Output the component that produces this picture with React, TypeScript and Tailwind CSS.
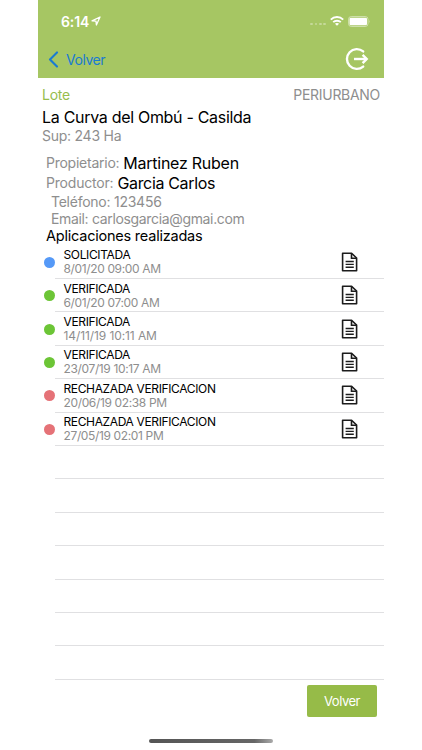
type Status = "requested" | "verified" | "rejected";

const dot: Record<Status, string> = {
  requested: "bg-[#5599f7]",
  verified: "bg-[#6cc536]",
  rejected: "bg-[#e57277]",
};

const applications: { status: Status; label: string; date: string }[] = [
  { status: "requested", label: "SOLICITADA", date: "8/01/20 09:00 AM" },
  { status: "verified", label: "VERIFICADA", date: "6/01/20 07:00 AM" },
  { status: "verified", label: "VERIFICADA", date: "14/11/19 10:11 AM" },
  { status: "verified", label: "VERIFICADA", date: "23/07/19 10:17 AM" },
  { status: "rejected", label: "RECHAZADA VERIFICACION", date: "20/06/19 02:38 PM" },
  { status: "rejected", label: "RECHAZADA VERIFICACION", date: "27/05/19 02:01 PM" },
];

function DocumentIcon() {
  return (
    <svg className="mr-[26px] h-[20px] w-[17px]" viewBox="0 0 17 20" fill="none" stroke="#1c1c1c" strokeWidth="1.6">
      <path d="M1.6 1.3H10.6L15.6 6V18.8H1.6Z" strokeLinejoin="round" />
      <path d="M10.5 1.4V6.3H15.4" />
      <path d="M4.6 9.5H12.8M4.6 12.4H12.8M4.6 15.3H12.8" strokeWidth="1.4" />
    </svg>
  );
}

function StatusBar() {
  return (
    <div className="flex h-[42px] items-center pr-[13px] pl-[23px] text-white">
      <span className="text-[14px] font-semibold tracking-[-0.1px]">6:14</span>
      <svg className="ml-[2px] h-[10px] w-[10px]" viewBox="0 0 10 10" fill="none" stroke="white" strokeWidth="1.3" strokeLinejoin="round">
        <path d="M1 4.9L9 1L5.4 9L5 5.1Z" />
      </svg>
      <div className="mt-[6px] ml-auto flex gap-[1.5px]">
        {[0, 1, 2, 3].map((i) => (
          <span key={i} className="size-[2.8px] rounded-full bg-white/35" />
        ))}
      </div>
      <svg className="ml-[4px] h-[10px] w-[14px]" viewBox="0 0 14 10" fill="none" stroke="white" strokeWidth="1.9">
        <path d="M0.8 3.6C4.2 0.2 9.8 0.2 13.2 3.6" />
        <path d="M3.2 6.2C5.2 4.2 8.8 4.2 10.8 6.2" />
        <path d="M4.9 7.7Q7 6.2 9.1 7.7L7 9.8Z" fill="white" stroke="none" />
      </svg>
      <svg className="ml-[4px] h-[11px] w-[23px]" viewBox="0 0 23 11">
        <rect x="0.5" y="0.5" width="19.5" height="10" rx="2.8" fill="none" stroke="white" strokeOpacity="0.45" />
        <rect x="1.5" y="1.7" width="17.5" height="7.6" rx="1.4" fill="white" />
        <path d="M21.3 3.8Q22.5 5.5 21.3 7.2Z" fill="white" fillOpacity="0.5" />
      </svg>
    </div>
  );
}

export default function App() {
  return (
    <div className="flex h-[750px] w-[422px] justify-center overflow-hidden bg-white font-['Inter',sans-serif] whitespace-nowrap text-[#8e8e8e]">
      <main className="flex h-full w-[346px] flex-col">
        <header className="h-[77.5px] shrink-0 bg-[#a6c663]">
          <StatusBar />
          <nav className="flex h-[34px] items-center pl-[10px]">
            <svg className="h-[17px] w-[11px]" viewBox="0 0 11 17" fill="none" stroke="#197bd2" strokeWidth="2.1" strokeLinecap="round" strokeLinejoin="round">
              <path d="M9 1.4L2 8.5L9 15.6" />
            </svg>
            <span className="ml-[7px] text-[14px] tracking-[-0.45px] text-[#197bd2]">Volver</span>
            <svg className="mr-[15px] ml-auto h-[24px] w-[24px]" viewBox="0 0 24 24" fill="none" stroke="white" strokeWidth="2.4">
              <path d="M18.2 4.4A9.9 9.9 0 1 0 18.2 19.6" strokeLinecap="round" />
              <path d="M9 12H21.5" />
              <path d="M17.6 7.9L21.7 12L17.6 16.1" />
            </svg>
          </nav>
        </header>

        <section className="pt-[7px] pr-[4px] pl-[4px]">
          <div className="flex h-[20px] items-center justify-between">
            <span className="text-[14px] tracking-[-0.25px] text-[#97bd4c]">Lote</span>
            <span className="text-[14px] tracking-[-0.3px]">PERIURBANO</span>
          </div>
          <h1 className="flex h-[25px] items-center text-[16px] tracking-[-0.3px] text-black">La Curva del Ombú - Casilda</h1>
          <p className="flex h-[12px] items-center text-[14px] tracking-[-0.25px]">Sup: 243 Ha</p>
        </section>

        <section className="pt-[11px] pl-[8px]">
          <p className="flex h-[20px] items-center gap-[4px] text-[14px] tracking-[-0.25px]">
            Propietario: <span className="text-[16px] tracking-[-0.25px] text-black">Martinez Ruben</span>
          </p>
          <p className="flex h-[20px] items-center gap-[4px] text-[14px] tracking-[-0.2px]">
            Productor: <span className="text-[16px] tracking-[-0.33px] text-black">Garcia Carlos</span>
          </p>
          <p className="flex h-[17px] items-center pl-[5px] text-[14px] tracking-[-0.25px]">Teléfono: 123456</p>
          <p className="flex h-[17px] items-center pl-[5px] text-[14px] tracking-[-0.34px]">Email: carlosgarcia@gmai.com</p>
          <h2 className="flex h-[19px] items-center text-[14.5px] tracking-[-0.22px] text-black">Aplicaciones realizadas</h2>
        </section>

        <ul className="flex flex-col">
          {applications.map((a) => (
            <li key={a.date} className="flex h-[33.42px] items-center pl-[6px]">
              <span className={`size-[11px] shrink-0 rounded-full ${dot[a.status]}`} />
              <div className="flex h-full flex-1 items-center justify-between border-b border-[#e0e0e2]">
                <div className="ml-[8.5px] flex flex-col pt-[1px] text-[12px] leading-[14px]">
                  <span className="tracking-[-0.36px] text-black">{a.label}</span>
                  <span className={a.date.includes("/11/") ? "tracking-[-0.09px]" : "tracking-[-0.36px]"}>{a.date}</span>
                </div>
                <DocumentIcon />
              </div>
            </li>
          ))}
          {[0, 1, 2, 3, 4, 5, 6].map((i) => (
            <li key={i} className="ml-[17px] h-[33.42px] border-b border-[#e0e0e2]" />
          ))}
        </ul>

        <button className="mt-[5px] mr-[7px] flex h-[32px] w-[70px] shrink-0 items-center justify-center self-end rounded-[2px] bg-[#96bb48] pt-[1px] text-[13px] tracking-[-0.45px] text-white">
          Volver
        </button>
        <div className="mt-[22px] h-[4px] w-[124px] shrink-0 self-center rounded-full bg-linear-to-r from-[#555] via-[#666] via-85% to-[#aaa]" />
      </main>
    </div>
  );
}
